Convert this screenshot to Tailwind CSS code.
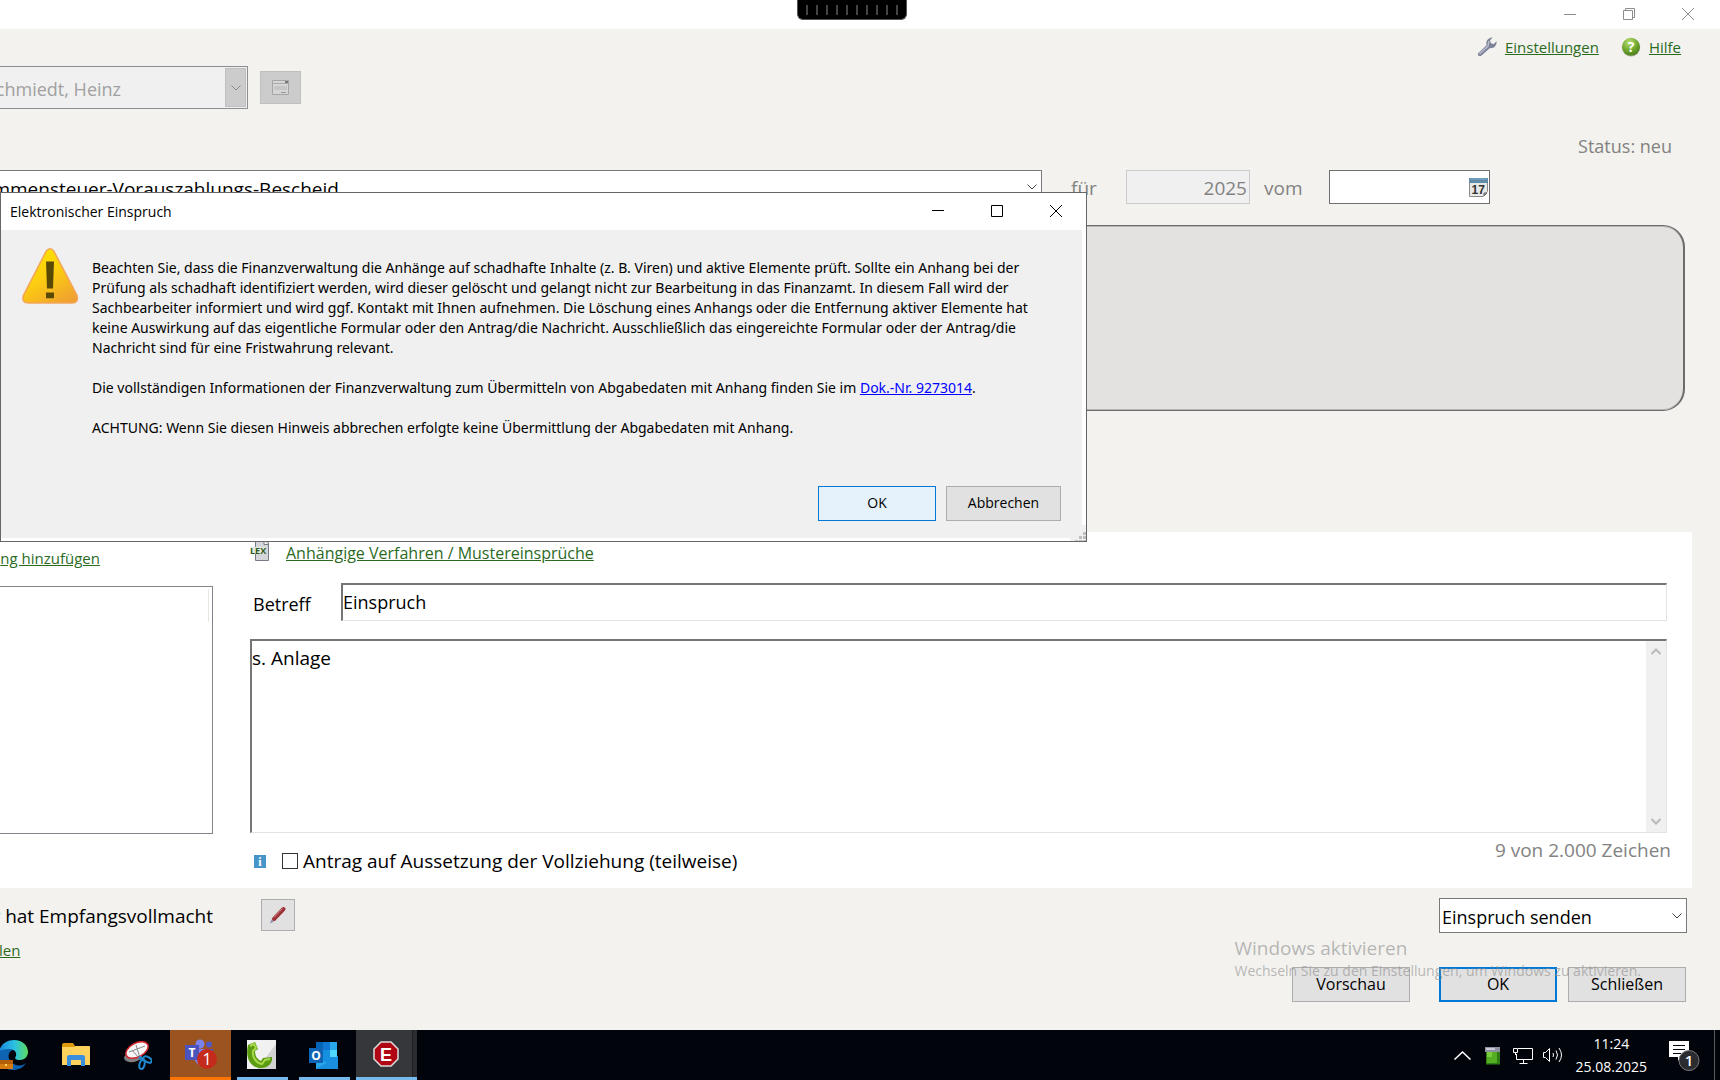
<!DOCTYPE html>
<html lang="de">
<head>
  <meta charset="UTF-8">
  <meta name="viewport" content="width=device-width, initial-scale=1.0">
  <title>Elektronischer Einspruch</title>
  <script src="https://cdn.jsdelivr.net/npm/@tailwindcss/browser@4"></script>
</head>
<body class="relative flex h-screen flex-col overflow-hidden bg-[#f3f2ee] font-['Open_Sans','Segoe_UI',sans-serif] text-[19px] leading-6 text-black">

  <!-- Fensterleiste -->
  <div class="flex h-[29px] shrink-0 items-center justify-end gap-[47px] bg-white pr-[26px] pb-px text-[#8c8c8c]">
    <button type="button" aria-label="Minimieren" class="pb-1"><svg width="12" height="12" viewBox="0 0 12 12" fill="none" stroke="currentColor"><path d="M0 8.500h12"/></svg></button>
    <button type="button" aria-label="Verkleinern"><svg width="12" height="12" viewBox="0 0 12 12" fill="none" stroke="currentColor"><path d="M.5 2.500h9v9h-9zM2.500 2.500V.5h9v9H9.500"/></svg></button>
    <button type="button" aria-label="Schließen"><svg width="12" height="12" viewBox="0 0 12 12" fill="none" stroke="currentColor"><path d="M0 0l12 12M12 0L0 12"/></svg></button>
  </div>

  <div class="absolute top-0 left-[797px] flex h-5 w-[110px] justify-between rounded-b-md border border-t-0 border-[#555] bg-black px-2 pt-[5px]">
    <i class="h-[10px] w-[2px] bg-[#444]"></i><i class="h-[10px] w-[2px] bg-[#444]"></i><i class="h-[10px] w-[2px] bg-[#444]"></i><i class="h-[10px] w-[2px] bg-[#444]"></i><i class="h-[10px] w-[2px] bg-[#444]"></i><i class="h-[10px] w-[2px] bg-[#444]"></i><i class="h-[10px] w-[2px] bg-[#444]"></i><i class="h-[10px] w-[2px] bg-[#444]"></i><i class="h-[10px] w-[2px] bg-[#444]"></i><i class="h-[10px] w-[2px] bg-[#444]"></i>
  </div>

  <main class="flex flex-1 flex-col">
    <nav class="flex justify-end pt-[6px] pr-[39px] text-[15px] text-[#2c6b1f]">
      <a href="#" class="mr-[22px] flex items-center gap-2 underline">
        <svg width="20" height="20" viewBox="0 0 20 20"><path d="M1 16.500L9.500 8.200C8.500 4 11.500.6 15.500.6L13 3.500l1 2.800 2.800.6L19.500 4.200c.6 4-2.500 7.500-6.500 6.900L4.500 18.500C2.500 20 .2 18.500 1 16.500z" fill="#7e8399"/><path d="M2.500 17l8.500-8 1-5" fill="none" stroke="#b6bacb" stroke-width="1.500"/></svg>
        Einstellungen
      </a>
      <a href="#" class="flex items-center gap-2 underline">
        <svg width="20" height="20" viewBox="0 0 20 20">
          <defs><radialGradient id="gruen" cx=".4" cy=".25" r=".8"><stop offset="0" stop-color="#b9df70"/><stop offset=".6" stop-color="#6da52c"/><stop offset="1" stop-color="#47761a"/></radialGradient></defs>
          <circle cx="10" cy="10.500" r="9.300" fill="#c5c5bb"/><circle cx="10" cy="9.800" r="9" fill="url(#gruen)"/>
          <text x="10" y="15" text-anchor="middle" font-family="Open Sans" font-size="14" font-weight="700" fill="#fff">?</text>
        </svg>
        Hilfe
      </a>
    </nav>

    <!-- Mandant -->
    <div class="mt-[7px] flex items-center gap-3">
      <div class="relative -ml-8 w-[280px]">
        <select aria-label="Mandant" disabled class="h-[43px] w-full appearance-none border border-[#8e8e92] bg-[#f0f0f0] pt-[2px] pl-[17px] text-[18px] text-[#a0a0a0] opacity-100"><option>Schmiedt, Heinz</option></select>
        <span class="absolute top-[2px] right-[2px] flex h-[39px] w-[21px] items-center justify-center border border-[#bfbfbf] bg-[#ccc]"><svg width="10" height="6" viewBox="0 0 10 6" fill="none" stroke="#8a8a8a"><path d="M.5.5L5 5 9.500.5"/></svg></span>
      </div>
      <button type="button" disabled aria-label="Mandant öffnen" class="flex h-[33px] w-[41px] items-center justify-center border border-[#bfbfbf] bg-[#ccc]">
        <svg width="18" height="16" viewBox="0 0 18 16"><path d="M.5.5h16v14H.5z" fill="#d6d6d6" stroke="#a6a6a6"/><path d="M1 3.500h15" stroke="#aaa"/><path d="M13 1h3v2h-3z" fill="#777"/><path d="M2 6h13v4H2z" fill="#c6c6c6"/><path d="M9 12.500h5" stroke="#999"/></svg>
      </button>
    </div>

    <p class="mt-[25px] mb-px pr-12 text-right text-[18px] text-[#828282]">Status: neu</p>

    <!-- Bescheid -->
    <div class="mt-[11px] flex items-center text-[#828282]">
      <div class="relative -ml-[58px] w-[1100px]">
        <select aria-label="Bescheid" class="h-[34px] w-full appearance-none border border-[#7a7a7a] bg-white pt-1 pl-px text-black"><option>Einkommensteuer-Vorauszahlungs-Bescheid</option></select>
        <svg class="absolute top-[14px] right-[5px]" width="10" height="6" viewBox="0 0 10 6" fill="none" stroke="#444"><path d="M.5.5L5 5 9.500.5"/></svg>
      </div>
      <label for="jahr" class="ml-[29px] w-[55px] pt-[2px]">für</label>
      <input id="jahr" type="text" value="2025" disabled class="h-[34px] w-[124px] border border-[#ccc] bg-[#f0f0f0] px-[2px] pt-[2px] text-right text-[#828282]">
      <label for="vom" class="ml-[14px] w-[65px] pt-[2px]">vom</label>
      <div class="relative">
        <input id="vom" type="text" class="h-[34px] w-[161px] border border-[#6f6f6f] bg-white px-1 text-black">
        <svg class="absolute top-2 right-[2px]" width="19" height="19" viewBox="0 0 19 19"><path d="M.5.500h18v13l-4 5H.5z" fill="#e8e8e6" stroke="#8b8b8b"/><path d="M0 0h19v5H0z" fill="#5f8bab"/><path d="M1 1h17" stroke="#86abc6"/><path d="M15 18v-3h3z" fill="#aaa" stroke="#666"/><text x="2.500" y="15.500" font-family="Liberation Sans" font-size="12" font-weight="700" fill="#333">17</text></svg>
      </div>
    </div>

    <div class="-ml-10 mt-[21px] mr-[35px] h-[186px] rounded-[22px] border border-r-2 border-[#6c6c6c] bg-[#e3e2e0] shadow-[inset_0_1px_0_#b5b5b3,inset_0_-1px_0_#b5b5b3]"></div>

    <!-- Formular -->
    <section class="mt-[121px] mr-7 flex flex-1 bg-white">
      <div class="flex w-[213px] flex-col overflow-hidden pt-[14px] pb-[54px]">
        <a href="#" class="mr-[113px] self-end text-[15px] whitespace-nowrap text-[#2c6b1f] underline">ng hinzufügen</a>
        <div class="mt-4 flex-1 border border-l-0 border-[#83838b] pt-[2px] pr-[3px]"><div class="h-[33px] border-r border-[#e3e8e3]"></div></div>
      </div>
      <div class="ml-[37px] flex flex-1 flex-col pr-[25px]">
        <div class="flex items-start gap-4 pt-[9px]">
          <svg width="20" height="20" viewBox="0 0 20 20"><path d="M5.500-2h9l4 4v17.500h-13z" fill="#d4d6da" stroke="#767b85"/><path d="M14 0v3.500h4" fill="#fff" stroke="#767b85"/><path d="M1 6h14v7H1z" fill="#e3e8e0"/><text x="0" y="13" font-family="Open Sans" font-size="9" font-weight="700" fill="#2c5a1e">LEX</text></svg>
          <a href="#" class="text-[16px] text-[#2c6b1f] underline">Anhängige Verfahren / Mustereinsprüche</a>
        </div>
        <div class="mt-[18px] flex items-center text-[18px]">
          <label for="betreff" class="w-[91px] pt-1 pl-[3px]">Betreff</label>
          <input id="betreff" type="text" value="Einspruch" class="h-[38px] min-w-0 flex-1 border-t-2 border-r border-b border-l-2 border-t-[#757575] border-r-[#e3e3e3] border-b-[#e3e3e3] border-l-[#757575] bg-white pb-[2px]">
        </div>
        <div class="relative mt-[18px] flex flex-1">
          <textarea aria-label="Begründung" class="w-full resize-none border-t-2 border-r border-b border-l-2 border-t-[#757575] border-r-[#e3e3e3] border-b-[#e3e3e3] border-l-[#757575] bg-white pt-[5px] outline-none">s. Anlage</textarea>
          <div class="absolute top-[2px] right-px bottom-px flex w-5 flex-col items-center justify-between bg-[#f0f0f0] py-[7px]">
            <svg width="10" height="7" viewBox="0 0 10 7" fill="none" stroke="#b9b9b9" stroke-width="2"><path d="M.5 6L5 1.500 9.500 6"/></svg>
            <svg width="10" height="7" viewBox="0 0 10 7" fill="none" stroke="#b9b9b9" stroke-width="2"><path d="M.5 1L5 5.500 9.500 1"/></svg>
          </div>
        </div>
        <div class="flex h-[55px] justify-between">
          <div class="flex items-center pt-px pl-1">
            <svg width="12" height="13" viewBox="0 0 12 13"><path d="M0 0h12v13H0z" fill="#4795c8"/><text x="6" y="10.500" text-anchor="middle" font-family="Liberation Serif" font-size="12" font-weight="700" fill="#fff">i</text></svg>
            <input id="aussetzung" type="checkbox" class="ml-4 size-4 appearance-none border border-[#333] bg-white">
            <label for="aussetzung" class="pl-[5px]">Antrag auf Aussetzung der Vollziehung (teilweise)</label>
          </div>
          <p class="-mr-1 pt-[5px] text-[#828282]">9 von 2.000 Zeichen</p>
        </div>
      </div>
    </section>

    <footer class="flex h-[142px] shrink-0 justify-between pt-[10px] pr-[33px]">
      <div>
        <div class="flex items-center pt-px">
          <div class="flex w-[213px] justify-end overflow-hidden pt-[2px] whitespace-nowrap">r hat Empfangsvollmacht</div>
          <button type="button" aria-label="Bearbeiten" class="ml-12 flex h-[32px] w-[34px] items-center justify-center border border-[#adadad] bg-[#e1e1e1]">
            <svg width="18" height="18" viewBox="0 0 18 18"><path d="M5 13L14.500 3" stroke="#9c3237" stroke-width="4" stroke-linecap="round"/><path d="M5 11.500L13.500 2.500" stroke="#d08486" stroke-width="1"/><path d="M1 17.500l1.500-4 2.500 2z" fill="#8b8fa8"/></svg>
          </button>
        </div>
        <a href="#" class="-ml-px mt-[7px] block text-[15px] text-[#2c6b1f] underline">len</a>
      </div>
      <div class="flex flex-col items-end">
        <div class="relative w-[248px]">
          <select aria-label="Aktion" class="h-[35px] w-full appearance-none border border-[#7a7a7a] bg-white pt-[2px] pl-[2px] text-[18px]"><option>Einspruch senden</option></select>
          <svg class="absolute top-[15px] right-[5px]" width="10" height="6" viewBox="0 0 10 6" fill="none" stroke="#444"><path d="M.5.5L5 5 9.500.5"/></svg>
        </div>
        <div class="mt-[34px] flex pr-px text-[16px]">
          <button type="button" class="mr-[29px] h-[35px] w-[118px] border border-[#adadad] bg-[#e1e1e1] pb-[2px]">Vorschau</button>
          <button type="button" class="mr-[11px] h-[35px] w-[118px] border-2 border-[#0078d7] bg-[#e1e1e1] pb-[2px]">OK</button>
          <button type="button" class="h-[35px] w-[118px] border border-[#adadad] bg-[#e1e1e1] pb-[2px]">Schließen</button>
        </div>
      </div>
    </footer>
  </main>

  <!-- Wasserzeichen -->
  <div class="pointer-events-none absolute right-[79px] bottom-[99px] text-[#8c8c8c]/60">
    <p class="pb-px">Windows aktivieren</p>
    <p class="text-[14px] leading-5">Wechseln Sie zu den Einstellungen, um Windows zu aktivieren.</p>
  </div>

  <!-- Taskleiste -->
  <div class="flex h-[50px] shrink-0 justify-between bg-[#01040a] text-white">
    <div class="-ml-4 flex gap-px">
      <button type="button" aria-label="Edge" class="flex w-[61px] items-center justify-center pr-[3px]">
        <svg width="30" height="30" viewBox="0 0 30 30">
          <defs><linearGradient id="edge" x1="0" x2="1"><stop offset="0" stop-color="#1b86dc"/><stop offset=".55" stop-color="#2ac3e0"/><stop offset="1" stop-color="#5edb5a"/></linearGradient></defs>
          <path d="M1 10c4-4 11-4 14 0-5 1-6 8-2 12 4 4 10 5 15 1-3 5-8 7-13 7C4 30-2 20 1 10z" fill="#0f63b3"/>
          <path d="M1 11C3 4 9 0 16 0c9 0 14 6 14 12 0 5-4 8-8 8-4 0-6-1-4-4 1-4-2-7-7-7-4 0-8 1-10 2z" fill="url(#edge)"/>
          <path d="M0 20h15v9H0z" fill="#d67b10"/><path d="M0 20h15v4H0z" fill="#b35f09"/><path d="M7 24h2v2H7z" fill="#ffd560"/>
        </svg>
      </button>
      <button type="button" aria-label="Explorer" class="flex w-[61px] items-center justify-center pr-[2px]">
        <svg width="28" height="24" viewBox="0 0 28 24"><path d="M0 2q0-2 2-2h9l2 3h13q2 0 2 2v4H0z" fill="#dd9a0c"/><path d="M0 4h12l2-1h13q1 0 1 1v18H0z" fill="#ffd25d"/><path d="M5 23V14q0-2 2-2h14q2 0 2 2v9h-4v-6H9v6z" fill="#3b8ede"/></svg>
      </button>
      <button type="button" aria-label="Snipping Tool" class="flex w-[61px] items-center justify-center pr-[2px]">
        <svg width="28" height="29" viewBox="0 0 28 29"><ellipse cx="9" cy="16" rx="9" ry="5" fill="#808080" transform="rotate(-10 9 16)"/><ellipse cx="13" cy="9" rx="12" ry="7" fill="#f6f6f6" stroke="#d4262e" stroke-width="1.500" transform="rotate(-28 13 9)"/><path d="M5 11l16-6M12 4l4 13M14 16L8 9" stroke="#888"/><ellipse cx="23.500" cy="18.500" rx="4.500" ry="2.500" fill="none" stroke="#2188cf" stroke-width="2" transform="rotate(30 23.500 18.500)"/><ellipse cx="18" cy="23.500" rx="2.500" ry="4.500" fill="none" stroke="#2188cf" stroke-width="2" transform="rotate(15 18 23.500)"/><path d="M15 16l5 3" stroke="#2188cf" stroke-width="3"/></svg>
      </button>
      <button type="button" aria-label="Teams" class="flex w-[61px] items-center justify-center border-b-3 border-[#fb7606] bg-[#9b5420] pr-[6px]">
        <svg class="ml-[6px]" width="34" height="32" viewBox="0 0 34 32"><circle cx="16" cy="6" r="4.500" fill="#7b83eb"/><circle cx="25" cy="6.500" r="3" fill="#5059c9"/><path d="M10 11h14v14q-3 3-7 2-6-1-7-8z" fill="#7b83eb"/><path d="M21 11h8v7h-8z" fill="#5059c9"/><path d="M1 7h14v15H1z" fill="#4b53bc"/><text x="8" y="18.500" text-anchor="middle" font-family="Open Sans" font-size="12" font-weight="700" fill="#fff">T</text><circle cx="23" cy="21" r="10" fill="#c42b1c"/><text x="23" y="26.500" text-anchor="middle" font-family="Open Sans" font-size="16" fill="#fff">1</text></svg>
      </button>
      <button type="button" aria-label="Telefonie" class="relative flex w-[61px] items-center justify-center pr-[2px] pb-[2px]">
        <svg width="29" height="29" viewBox="0 0 29 29"><path d="M0 0h29v29H0z" fill="#f1f1f1"/><path d="M29 4L10 29h19z" fill="#d2d2d2"/><path d="M1 5L8 2l3 7-3 2c0 5 2 8 6 10l2-3 9-1c1 5-3 11-11 11C3 28-2 17 1 5z" fill="#5c9c10"/><path d="M3 6l4-2 2 4-3 3c-1 6 3 12 9 13l3-4 5-1" fill="none" stroke="#a8d94a" stroke-width="2"/></svg>
        <i class="absolute inset-x-[5px] bottom-0 h-[3px] bg-[#76b9ed]"></i>
      </button>
      <button type="button" aria-label="Outlook" class="relative flex w-[61px] items-center justify-center pr-[2px]">
        <svg width="29" height="27" viewBox="0 0 29 27"><path d="M7 0h21v22H7z" fill="#1490df"/><path d="M7 0h7v8H7z" fill="#0364b8"/><path d="M14 0h7v8h-7z" fill="#0f78d4"/><path d="M21 0h7v8h-7z" fill="#28a8ea"/><path d="M14 8h7v7h-7z" fill="#1490df"/><path d="M21 8h7v7h-7z" fill="#50d9ff"/><path d="M7 27V15l11 6 11-7v13z" fill="#28a8ea"/><path d="M7 27l22-13v13z" fill="#1a8fe0"/><path d="M0 6h14v15H0z" fill="#0f64b5"/><text x="7" y="18" text-anchor="middle" font-family="Open Sans" font-size="12" font-weight="700" fill="#fff">O</text></svg>
        <i class="absolute inset-x-[5px] bottom-0 h-[3px] bg-[#76b9ed]"></i>
      </button>
      <button type="button" aria-label="Einspruch" class="flex w-[61px] items-center justify-center border-b-3 border-[#76b9ed] bg-[linear-gradient(to_right,#36373a_56px,#1c1d20_56px,#1c1d20_57px,#2b2c2f_57px)] pr-[2px]">
        <svg width="26" height="26" viewBox="0 0 26 26"><path d="M8 1h10l7 7v10l-7 7H8l-7-7V8z" fill="#b00614" stroke="#ddd" stroke-width="1.500"/><text x="13" y="19.500" text-anchor="middle" font-family="Liberation Sans" font-size="18" font-weight="700" fill="#fff">E</text></svg>
      </button>
    </div>
    <div class="flex items-center">
      <button type="button" aria-label="Ausgeblendete Symbole"><svg width="17" height="9" viewBox="0 0 17 9" fill="none" stroke="#fff" stroke-width="1.500"><path d="M.5 8.500l8-7.500 8 7.500"/></svg></button>
      <svg class="ml-[14px]" width="16" height="19" viewBox="0 0 16 19"><path d="M1 5h14v13.500H1z" fill="#2f7d14"/><path d="M2 6h10v11H2z" fill="#55ad22"/><path d="M2 6h5v5H2z" fill="#79cd3a"/><path d="M0 1h15v5H0z" fill="#8c90a0"/><path d="M1 2h9v2H1z" fill="#c8cbd6"/></svg>
      <svg class="ml-3" width="20" height="17" viewBox="0 0 20 17" fill="none" stroke="#fff"><path d="M5 1.500h14.500v11H3.500V7M6.500 16.500h8M10.500 13v3M.5 1.500h4v4h-4zM2.500 6v2"/></svg>
      <svg class="ml-[10px]" width="21" height="18" viewBox="0 0 21 18" fill="none" stroke="#fff"><path d="M.5 6.500h2l4-4v13l-4-4h-2zM10 7q1 2 0 4M13 4.500q3 4.500 0 9M16 2q5 7 0 14"/></svg>
      <div class="ml-3 text-center text-[14px] leading-[23px]">11:24<br>25.08.2025</div>
      <svg class="ml-[22px]" width="31" height="31" viewBox="0 0 31 31"><path d="M0 1h20v16H12l-3 4v-4H0z" fill="#fff"/><path d="M4 5.500h12M4 9.500h12M4 13.500h8" stroke="#01040a"/><circle cx="20" cy="20.500" r="10" fill="#2b2c2f" stroke="#777"/><text x="20" y="26" text-anchor="middle" font-family="Open Sans" font-size="15" font-weight="600" fill="#fff">1</text></svg>
      <i class="ml-[14px] h-full w-px bg-[#5a5c60]"></i>
      <i class="w-[5px]"></i>
    </div>
  </div>

  <!-- Hinweisdialog -->
  <div role="dialog" aria-labelledby="titel" class="absolute top-[192px] left-0 w-[1087px] border border-[#666] bg-white pr-1 pb-[3px] text-[14px]">
    <div class="flex h-[37px] items-center justify-between pr-5 pl-[9px]">
      <h1 id="titel">Elektronischer Einspruch</h1>
      <div class="flex items-center gap-[47px] pb-[2px]">
        <button type="button" aria-label="Minimieren"><svg width="12" height="12" viewBox="0 0 12 12" fill="none" stroke="#000"><path d="M0 5.500h12"/></svg></button>
        <button type="button" aria-label="Maximieren"><svg width="12" height="12" viewBox="0 0 12 12" fill="none" stroke="#000"><path d="M.5.5h11v11H.5z"/></svg></button>
        <button type="button" aria-label="Schließen"><svg width="12" height="12" viewBox="0 0 12 12" fill="none" stroke="#000"><path d="M0 0l12 12M12 0L0 12"/></svg></button>
      </div>
    </div>
    <div class="bg-[#f0f0f0] pt-[18px] pr-[21px] pb-[17px] pl-5">
      <div class="flex gap-[13px]">
        <svg class="shrink-0" width="58" height="56" viewBox="0 0 58 58" preserveAspectRatio="none">
          <defs><linearGradient id="warn" x1=".2" y1="0" x2=".8" y2="1"><stop offset="0" stop-color="#ffe600"/><stop offset=".5" stop-color="#fccb12"/><stop offset="1" stop-color="#f0a030"/></linearGradient></defs>
          <path d="M25 3.500Q29-2 33 3.500L56 49Q58 57 51 57H8Q0 57 2.500 49z" fill="url(#warn)" stroke="#f3a659" stroke-width="1.500"/>
          <path d="M25 14h8l-1 28h-6zM25 46h8v6h-8z" fill="#584a04"/>
        </svg>
        <div class="pt-[10px] font-['Noto_Sans','Segoe_UI',sans-serif] leading-5">
          <p>Beachten Sie, dass die Finanzverwaltung die Anhänge auf schadhafte Inhalte (z. B. Viren) und aktive Elemente prüft. Sollte ein Anhang bei der<br>Prüfung als schadhaft identifiziert werden, wird dieser gelöscht und gelangt nicht zur Bearbeitung in das Finanzamt. In diesem Fall wird der<br>Sachbearbeiter informiert und wird ggf. Kontakt mit Ihnen aufnehmen. Die Löschung eines Anhangs oder die Entfernung aktiver Elemente hat<br>keine Auswirkung auf das eigentliche Formular oder den Antrag/die Nachricht. Ausschließlich das eingereichte Formular oder der Antrag/die<br>Nachricht sind für eine Fristwahrung relevant.</p>
          <p class="mt-5">Die vollständigen Informationen der Finanzverwaltung zum Übermitteln von Abgabedaten mit Anhang finden Sie im <a href="#" class="text-[#0000ff] underline">Dok.-Nr. 9273014</a>.</p>
          <p class="mt-5">ACHTUNG: Wenn Sie diesen Hinweis abbrechen erfolgte keine Übermittlung der Abgabedaten mit Anhang.</p>
        </div>
      </div>
      <div class="mt-12 flex justify-end gap-[10px]">
        <button type="button" class="h-[35px] w-[118px] border border-[#0078d7] bg-[#e5f1fb] pb-[2px]">OK</button>
        <button type="button" class="h-[35px] w-[115px] border border-[#adadad] bg-[#e1e1e1] pb-[2px]">Abbrechen</button>
      </div>
    </div>
    <svg class="absolute right-0 bottom-0" width="16" height="16" viewBox="0 0 16 16"><path d="M0 0h16v16H0z" fill="#f0f0f0"/><path d="M13 7h3v3h-3zM13 11h3v3h-3zM9 11h3v3H9zM13 15h3v1h-3zM9 15h3v1H9zM5 15h3v1H5z" fill="#bfbfbf"/></svg>
  </div>
</body>
</html>
